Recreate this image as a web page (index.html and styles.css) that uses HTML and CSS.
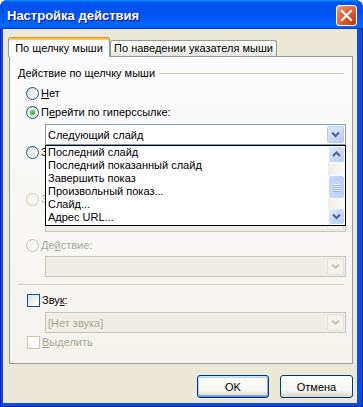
FILE: index.html
```html
<!DOCTYPE html>
<html lang="ru">
<head>
<meta charset="utf-8">
<title>Настройка действия</title>
<link rel="stylesheet" href="styles.css">
</head>
<body>
<div class="window">
  <div class="titlebar">
    <span class="title">Настройка действия</span>
    <span class="close"><svg width="19" height="19" viewBox="0 0 19 19"><path d="M5 5 L14 14 M14 5 L5 14" stroke="#fff" stroke-width="2.2" stroke-linecap="square"/></svg></span>
  </div>
  <div class="client">
    <div class="tabs">
      <div class="tab active">По щелчку мыши</div>
      <div class="tab second">По наведении указателя мыши</div>
    </div>
    <div class="panel">
      <div class="group-head"><span>Действие по щелчку мыши</span><span class="line"></span></div>
      <div class="opt r1"><span class="radio"></span><span><u>Н</u>ет</span></div>
      <div class="opt r2"><span class="radio checked"></span><span>П<u>е</u>рейти по гиперссылке:</span></div>
      <div class="combo c1"><span>Следующий слайд</span><span class="cbtn"><svg width="15" height="15" viewBox="0 0 15 15"><path d="M4 5.5 L7.5 9 L11 5.5" fill="none" stroke="#4D6185" stroke-width="2"/></svg></span></div>
      <div class="opt r3"><span class="radio"></span><span class="clip">Запустить программу:</span></div>
      <div class="combo c2"></div>
      <div class="opt r4 disabled"><span class="radio"></span><span class="clip">Запустить макрос:</span></div>
      <div class="combo c3 disabled"><span class="cbtn"><svg width="15" height="15" viewBox="0 0 15 15"><path d="M4 5.5 L7.5 9 L11 5.5" fill="none" stroke="#C9C7BA" stroke-width="2"/></svg></span></div>
      <div class="opt r5 disabled"><span class="radio"></span><span>Де<u>й</u>ствие:</span></div>
      <div class="combo c4 disabled"><span class="cbtn"><svg width="15" height="15" viewBox="0 0 15 15"><path d="M4 5.5 L7.5 9 L11 5.5" fill="none" stroke="#C9C7BA" stroke-width="2"/></svg></span></div>
      <div class="sep"></div>
      <div class="opt k1"><span class="check"></span><span>Зву<u>к</u>:</span></div>
      <div class="combo c5 disabled"><span>[Нет звука]</span><span class="cbtn"><svg width="15" height="15" viewBox="0 0 15 15"><path d="M4 5.5 L7.5 9 L11 5.5" fill="none" stroke="#C9C7BA" stroke-width="2"/></svg></span></div>
      <div class="opt k2 disabled"><span class="check"></span><span><u>В</u>ыделить</span></div>

      <div class="dropdown">
        <div class="items">
          <div class="item">Последний слайд</div>
          <div class="item">Последний показанный слайд</div>
          <div class="item">Завершить показ</div>
          <div class="item">Произвольный показ...</div>
          <div class="item">Слайд...</div>
          <div class="item">Адрес URL...</div>
        </div>
        <div class="scrollbar">
          <span class="sbtn"><svg width="15" height="15" viewBox="0 0 15 15"><path d="M4 9 L7.5 5.5 L11 9" fill="none" stroke="#4D6185" stroke-width="2"/></svg></span>
          <div class="track"><span class="thumb"><i></i><i></i><i></i><i></i></span></div>
          <span class="sbtn"><svg width="15" height="15" viewBox="0 0 15 15"><path d="M4 5.5 L7.5 9 L11 5.5" fill="none" stroke="#4D6185" stroke-width="2"/></svg></span>
        </div>
      </div>
    </div>
    <div class="buttons">
      <button class="btn ok">OK</button>
      <button class="btn cancel">Отмена</button>
    </div>
  </div>
</div>
</body>
</html>
```
FILE: styles.css
```css
* { box-sizing: border-box; }
html, body { margin: 0; padding: 0; background: #ffffff; }
body { font-family: "Liberation Sans", Arial, sans-serif; font-size: 11px; color: #000; }

.window {
  width: 363px; height: 407px;
  display: flex; flex-direction: column;
  background: #0A4FE0;
  border-radius: 8px 8px 0 0;
  overflow: hidden;
  box-shadow: inset 1px 0 #0019CF, inset -1px 0 #001EA0, inset 0 -1px #001EA0;
}
.titlebar {
  height: 29px; flex: none;
  display: flex; align-items: flex-start;
  padding: 0 6px 0 7px;
  background: linear-gradient(180deg, #0997ff 0%, #0053ee 8%, #0050ee 40%, #0066ff 88%, #0066ff 93%, #005bff 95%, #003dd7 96%, #003dd7 100%);
}
.title {
  flex: 1; color: #fff; font-weight: bold; font-size: 13px;
  line-height: 16px; margin-top: 8px;
  text-shadow: 1px 1px #0F1089;
}
.close {
  width: 21px; height: 21px; margin-top: 5px;
  border: 1px solid #fff; border-radius: 3px;
  background: radial-gradient(circle at 85% 85%, #C33B0F 0%, #DC5A2A 45%, #E8825E 80%, #F6B9A3 100%);
  display: flex; align-items: center; justify-content: center;
}

.client {
  flex: 1;
  margin: 0 6px 4px 3px;
  background: #ECE9D8;
  display: flex; flex-direction: column;
}
.tabs {
  display: flex; align-items: flex-end;
  height: 19px; margin: 8px 0 0 5px;
  position: relative; z-index: 1;
}
.tab {
  height: 16px;
  border: 1px solid #919B9C; border-bottom: 0;
  border-radius: 3px 3px 0 0;
  background: linear-gradient(180deg, #FFFFFF, #F4F4F0 60%, #E6E5DE);
  text-align: center; line-height: 15px;
  white-space: nowrap;
}
.tab.second { width: 167px; }
.tab.active {
  width: 102px; height: 20px; margin-bottom: -1px;
  border-top: 1px solid #E68B2C;
  box-shadow: inset 0 2px 0 #FFC73C;
  background: #FCFCFE;
  padding-top: 2px; line-height: 16px;
}

.panel {
  position: relative;
  height: 308px;
  margin: 0 4px 0 6px;
  border: 1px solid #919B9C;
  background: linear-gradient(180deg, #FCFCFE, #F4F3EE);
  padding: 0 8px;
  display: flex; flex-direction: column;
}
.group-head { display: flex; align-items: center; height: 14px; margin-top: 9px; }
.group-head .line { flex: 1; height: 1px; background: #D0D0BF; margin-left: 4px; }

.opt { display: flex; align-items: center; height: 14px; margin-left: 8px; white-space: nowrap; }
.opt.disabled { color: #ACA899; }
.opt .clip { width: 4px; overflow: hidden; flex: none; }
.r1 { margin-top: 6px; }
.r2 { margin-top: 5px; }
.r3 { margin-top: 0; }
.r4 { margin-top: 7px; }
.r5 { margin-top: 6px; }
.k1 { margin-top: 8px; margin-left: 9px; }
.k2 { margin-top: 2px; margin-left: 9px; }

.radio {
  width: 13px; height: 13px; flex: none; margin-right: 2px;
  border: 1px solid #1C5180; border-radius: 50%;
  background: linear-gradient(135deg, #DCD9D0, #FFFFFF 80%);
  display: flex; align-items: center; justify-content: center;
}
.radio.checked::after {
  content: ""; width: 5px; height: 5px; border-radius: 50%;
  background: radial-gradient(circle at 35% 35%, #5BD85B, #21A121);
}
.disabled .radio { border-color: #CAC8BB; background: #F6F5F1; }
.check {
  width: 13px; height: 13px; flex: none; margin-right: 2px;
  border: 1px solid #1C5180;
  background: linear-gradient(135deg, #DCDCD7, #FFFFFF 85%);
}
.disabled .check { border-color: #CAC8BB; background: #FFFFFF; }

.combo {
  height: 21px; flex: none;
  margin-left: 27px; margin-right: -2px;
  border: 1px solid #7F9DB9; background: #fff;
  display: flex; align-items: center;
  padding-left: 2px;
  white-space: nowrap;
}
.combo.disabled { border-color: #C9C7BA; background: #EEEDE6; color: #ACA899; }
.c1 { margin-top: 5px; }
.c2 { margin-top: 5px; }
.c3 { margin-top: 5px; }
.c4 { margin-top: 4px; }
.c5 { margin-top: 5px; }
.cbtn {
  margin-left: auto; margin-right: 1px;
  width: 17px; height: 17px;
  border: 1px solid #B5C8F7; border-radius: 2px;
  background: linear-gradient(135deg, #E3EBFE, #B9CEF9);
  display: flex; align-items: center; justify-content: center;
}
.disabled .cbtn { border-color: #E4E2DA; background: #F4F3EE; }

.sep { height: 1px; margin-top: 7px; background: #D0D0BF; flex: none; }

.dropdown {
  position: absolute; top: 88px; left: 35px;
  width: 301px; height: 81px;
  border: 1px solid #000; background: #fff;
  display: flex;
}
.items { flex: 1; padding-left: 2px; }
.item { height: 13px; line-height: 13px; white-space: nowrap; }
.scrollbar {
  width: 17px; display: flex; flex-direction: column;
  background: linear-gradient(90deg, #EEEDE5, #FBFBF8);
}
.sbtn {
  width: 17px; height: 17px; flex: none;
  border: 1px solid #fff; border-radius: 3px;
  background: linear-gradient(135deg, #E1EAFE, #B7CAF5);
  display: flex; align-items: center; justify-content: center;
}
.track { flex: 1; }
.thumb {
  display: flex; flex-direction: column; align-items: center; justify-content: center; gap: 1px;
  width: 17px; height: 24px; margin-top: 12px;
  border: 1px solid #fff; border-radius: 3px;
  background: linear-gradient(90deg, #C9D8FC, #BCCFF9);
}
.thumb i { display: block; width: 7px; height: 1px; background: #EEF4FE; box-shadow: 0 1px #8CB0F8; }

.buttons {
  display: flex; justify-content: flex-end; gap: 11px;
  margin: 11px 4px 0 0;
}
.btn {
  height: 23px; padding: 0;
  border: 1px solid #003C74; border-radius: 3px;
  background: linear-gradient(180deg, #FFFFFF, #F4F4F0 70%, #E3E0D6 90%, #D6D0C5);
  font-family: "Liberation Sans", Arial, sans-serif; font-size: 11px; color: #000;
}
.btn.ok {
  width: 72px;
  box-shadow: inset 0 1px #CEE7FF, inset 0 -1px #6982EE, inset 1px 0 #B8D1F5, inset -1px 0 #8EAFEA, inset 0 2px #BCD4F6, inset 0 -2px #89ADE4;
}
.btn.cancel { width: 73px; }
```
